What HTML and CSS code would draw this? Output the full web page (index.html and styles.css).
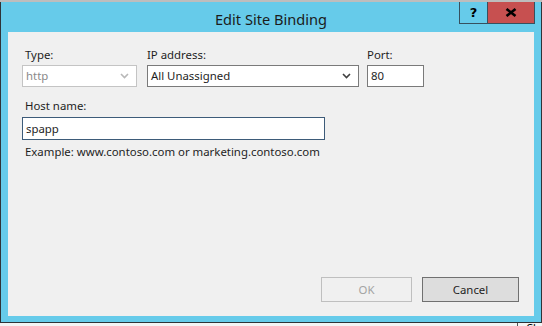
FILE: index.html
```html
<!DOCTYPE html>
<html>
<head>
<meta charset="utf-8">
<link rel="stylesheet" href="styles.css">
</head>
<body>
<div class="screen">
  <div class="topstrip"></div>
  <div class="dialog">
    <div class="titlebar">
      <div></div>
      <div class="title">Edit Site Binding</div>
      <div class="caption-btns">
        <div class="cbtn help">?</div>
        <div class="cbtn close">
          <svg width="12" height="9" viewBox="0 0 12 9"><path d="M1.5 1 L10.5 8 M10.5 1 L1.5 8" stroke="#000" stroke-width="2.6" fill="none"/></svg>
        </div>
      </div>
    </div>
    <div class="content">
      <div class="row1">
        <div class="field type">
          <div class="label label-indent">Type:</div>
          <div class="combo disabled">
            <span>http</span>
            <svg class="chev" width="9" height="6" viewBox="0 0 9 6"><path d="M1 1 L4.5 4.5 L8 1" stroke="#b8b8b8" stroke-width="1.6" fill="none"/></svg>
          </div>
        </div>
        <div class="field ip">
          <div class="label">IP address:</div>
          <div class="combo">
            <span>All Unassigned</span>
            <svg class="chev" width="9" height="6" viewBox="0 0 9 6"><path d="M1 1 L4.5 4.5 L8 1" stroke="#404040" stroke-width="1.6" fill="none"/></svg>
          </div>
        </div>
        <div class="field port">
          <div class="label">Port:</div>
          <div class="textbox">80</div>
        </div>
      </div>
      <div class="label label-indent host-label">Host name:</div>
      <div class="textbox host">spapp</div>
      <div class="example">Example: www.contoso.com or marketing.contoso.com</div>
      <div class="footer">
        <div class="btn disabled">OK</div>
        <div class="btn cancel">Cancel</div>
      </div>
    </div>
  </div>
  <div class="below">
    <div class="below-cell">Close</div>
  </div>
</div>
</body>
</html>
```
FILE: styles.css
```css
* { box-sizing: border-box; }
html, body { margin: 0; padding: 0; }
body {
  font-family: "Noto Sans", "Open Sans", sans-serif;
  font-size: 11.4px;
  color: #1e1e1e;
  background: #f0f0f0;
}
.screen {
  width: 542px;
  height: 326px;
  overflow: hidden;
  background: #f4f4f4;
}
.topstrip {
  height: 2px;
  background: #bdbdbd;
}
.dialog {
  width: 542px;
  height: 321px;
  background: #66cbea;
  border-left: 1px solid #2f3337;
  border-right: 1px solid #2f3337;
  border-bottom: 1px solid #2f3337;
  padding: 0 7px 6px 7px;
  display: flex;
  flex-direction: column;
}
.titlebar {
  height: 30px;
  display: grid;
  grid-template-columns: 1fr auto 1fr;
  align-items: start;
}
.title {
  font-size: 14.6px;
  line-height: 18px;
  padding-top: 8px;
  color: #1b1b1b;
}
.caption-btns {
  display: flex;
  justify-content: flex-end;
  margin-right: -1px;
}
.cbtn {
  height: 22px;
  border: 1px solid #37505e;
  border-top: none;
  display: flex;
  align-items: center;
  justify-content: center;
  font-family: "DejaVu Sans", sans-serif;
  font-weight: bold;
  font-size: 13px;
  color: #000;
}
.help {
  width: 29px;
  background: #66cbea;
}
.close {
  width: 47px;
  border-left: none;
  background: #c75050;
}
.content {
  height: 284px;
  background: #f0f0f0;
  padding: 15px 15px 14px 14px;
  display: flex;
  flex-direction: column;
}
.row1 {
  display: flex;
}
.field { display: flex; flex-direction: column; }
.type { width: 115px; margin-right: 10px; }
.ip { width: 212px; margin-right: 8px; }
.port { width: 57px; }
.label {
  line-height: 16px;
  height: 16px;
  margin-bottom: 2px;
  white-space: nowrap;
}
.label-indent { padding-left: 3px; }
.combo {
  height: 22px;
  border: 1px solid #7a7a7a;
  background: #fff;
  display: flex;
  align-items: center;
  justify-content: space-between;
  padding: 0 7px 0 3px;
  line-height: 16px;
}
.combo.disabled {
  border-color: #c4c4c4;
  color: #8a8a8a;
}
.chev { display: block; }
.textbox {
  height: 22px;
  border: 1px solid #7a7a7a;
  background: #fff;
  padding: 0 3px;
  line-height: 20px;
}
.host-label {
  margin-top: 11px;
  margin-bottom: 3px;
}
.textbox.host {
  width: 303px;
  height: 23px;
  line-height: 21px;
  border-color: #3d5b79;
}
.example {
  margin-top: 4px;
  line-height: 16px;
  padding-left: 3px;
}
.footer {
  margin-top: auto;
  display: flex;
  justify-content: flex-end;
  gap: 10px;
}
.btn {
  height: 25px;
  line-height: 23px;
  text-align: center;
  border: 1px solid #707070;
  background: #dddddd;
}
.btn.disabled {
  width: 91px;
  border-color: #bfbfbf;
  background: #f0f0f0;
  color: #a3a3a3;
}
.btn.cancel {
  width: 97px;
}
.below {
  height: 3px;
  display: flex;
  justify-content: flex-end;
}
.below-cell {
  width: 25px;
  border-left: 1px solid #555;
  font-size: 11px;
  line-height: 10px;
  padding-left: 8px;
  overflow: hidden;
  color: #000;
}
```
